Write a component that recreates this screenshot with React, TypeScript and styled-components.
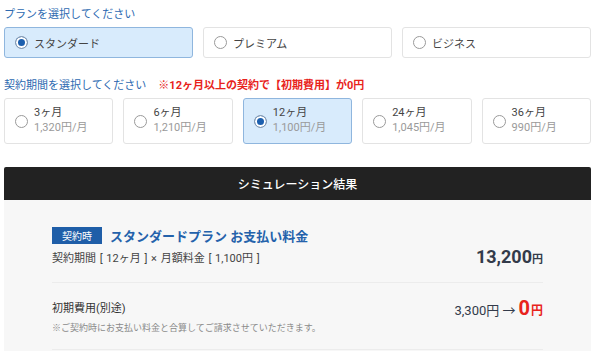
import React, { useState } from 'react';
import styled, { createGlobalStyle } from 'styled-components';

const GlobalStyle = createGlobalStyle`
  * { box-sizing: border-box; }
  body {
    margin: 0;
    background: #fff;
    font-family: Roboto, "Noto Sans CJK JP", sans-serif;
    color: #333;
  }
`;

const Page = styled.div`
  width: 587px;
  margin-left: 4px;
  padding-top: 5px;
`;

const SectionHead = styled.div<{ $mt?: number }>`
  display: flex;
  align-items: center;
  gap: 12px;
  height: 16px;
  margin-top: ${p => p.$mt ?? 0}px;
  font-size: 11px;
  color: #2d6ab1;
`;

const Notice = styled.span`
  color: #e8231c;
  font-weight: 700;
`;

const Row = styled.div<{ $cols: number; $mt: number }>`
  display: grid;
  grid-template-columns: repeat(${p => p.$cols}, 1fr);
  gap: 10px;
  margin-top: ${p => p.$mt}px;
`;

const Option = styled.label<{ $active: boolean; $h: number }>`
  display: flex;
  align-items: center;
  gap: 6px;
  height: ${p => p.$h}px;
  padding-left: 10px;
  border: 1px solid ${p => (p.$active ? '#8fb6de' : '#e3e3e3')};
  border-radius: 3px;
  background: ${p => (p.$active ? '#d8ebfc' : '#fff')};
  cursor: pointer;
`;

const Radio = styled.span<{ $on: boolean }>`
  flex: none;
  width: 13px;
  height: 13px;
  border-radius: 50%;
  border: 1px solid ${p => (p.$on ? '#8a9bb0' : '#9a9a9a')};
  background: ${p => (p.$on ? '#1c5fae' : '#fff')};
  box-shadow: ${p => (p.$on ? 'inset 0 0 0 2px #fff' : 'none')};
`;

const PlanName = styled.span`
  font-size: 11px;
  color: #444;
`;

const PeriodText = styled.div`
  display: flex;
  flex-direction: column;
  line-height: 15px;
  margin-top: -2px;
`;

const Months = styled.span`
  font-size: 11px;
  color: #444;
`;

const Price = styled.span`
  font-size: 11px;
  color: #9a9a9a;
`;

const ResultHead = styled.div`
  margin-top: 23px;
  height: 33px;
  background: #222;
  border-radius: 2px 2px 0 0;
  color: #fff;
  font-size: 12px;
  font-weight: 500;
  display: flex;
  align-items: center;
  justify-content: center;
`;

const ResultBody = styled.div`
  background: #f7f7f7;
  padding: 26px 48px 0 48px;
  height: 160px;
`;

const Line = styled.div<{ $h: number; $top?: boolean }>`
  display: flex;
  justify-content: space-between;
  align-items: ${p => (p.$top ? 'flex-start' : 'center')};
  height: ${p => p.$h}px;
  border-bottom: 1px solid #ececec;
`;

const Col = styled.div`
  display: flex;
  flex-direction: column;
`;

const TitleRow = styled.div`
  display: flex;
  align-items: center;
  gap: 8px;
`;

const Badge = styled.span`
  background: #1f5ea8;
  color: #fff;
  font-size: 10px;
  height: 17px;
  width: 50px;
  display: flex;
  align-items: center;
  justify-content: center;
`;

const PlanTitle = styled.span`
  color: #2462ab;
  font-size: 13px;
  font-weight: 700;
`;

const Sub = styled.span`
  font-size: 11px;
  color: #444;
  margin-top: 4px;
  word-spacing: 1px;
`;

const Total = styled.span`
  font-size: 18px;
  font-weight: 700;
  color: #333b4a;
  margin-top: 20px;
`;

const Yen = styled.span`
  font-size: 11px;
`;

const FeeLabel = styled.span`
  font-size: 11px;
  color: #333;
`;

const FeeNote = styled.span`
  font-size: 9px;
  color: #8a8a8a;
  margin-top: 6px;
`;

const Fee = styled.span`
  font-size: 13px;
  color: #333b4a;
  display: flex;
  align-items: baseline;
  gap: 3px;
  margin-top: -16px;
`;

const Zero = styled.span`
  color: #e8231c;
  font-size: 20px;
  font-weight: 700;
`;

const ZeroYen = styled.span`
  color: #e8231c;
  font-size: 12px;
  font-weight: 700;
  margin-left: -2px;
`;

const plans = ['スタンダード', 'プレミアム', 'ビジネス'];
const periods = [
  { m: '3ヶ月', p: '1,320円/月' },
  { m: '6ヶ月', p: '1,210円/月' },
  { m: '12ヶ月', p: '1,100円/月' },
  { m: '24ヶ月', p: '1,045円/月' },
  { m: '36ヶ月', p: '990円/月' },
];

export default function App() {
  const [plan, setPlan] = useState(0);
  const [period, setPeriod] = useState(2);

  return (
    <Page>
      <GlobalStyle />
      <SectionHead>プランを選択してください</SectionHead>
      <Row $cols={3} $mt={6}>
        {plans.map((name, i) => (
          <Option key={name} $active={plan === i} $h={31} onClick={() => setPlan(i)}>
            <Radio $on={plan === i} />
            <PlanName>{name}</PlanName>
          </Option>
        ))}
      </Row>
      <SectionHead $mt={18}>
        契約期間を選択してください
        <Notice>※12ヶ月以上の契約で【初期費用】が0円</Notice>
      </SectionHead>
      <Row $cols={5} $mt={6}>
        {periods.map((o, i) => (
          <Option key={o.m} $active={period === i} $h={46} onClick={() => setPeriod(i)}>
            <Radio $on={period === i} />
            <PeriodText>
              <Months>{o.m}</Months>
              <Price>{o.p}</Price>
            </PeriodText>
          </Option>
        ))}
      </Row>
      <ResultHead>シミュレーション結果</ResultHead>
      <ResultBody>
        <Line $h={57} $top>
          <Col>
            <TitleRow>
              <Badge>契約時</Badge>
              <PlanTitle>スタンダードプラン お支払い料金</PlanTitle>
            </TitleRow>
            <Sub>契約期間 [ 12ヶ月 ] × 月額料金 [ 1,100円 ]</Sub>
          </Col>
          <Total>
            13,200<Yen>円</Yen>
          </Total>
        </Line>
        <Line $h={67}>
          <Col>
            <FeeLabel>初期費用(別途)</FeeLabel>
            <FeeNote>※ご契約時にお支払い料金と合算してご請求させていただきます。</FeeNote>
          </Col>
          <Fee>
            3,300円 → <Zero>0</Zero>
            <ZeroYen>円</ZeroYen>
          </Fee>
        </Line>
      </ResultBody>
    </Page>
  );
}
